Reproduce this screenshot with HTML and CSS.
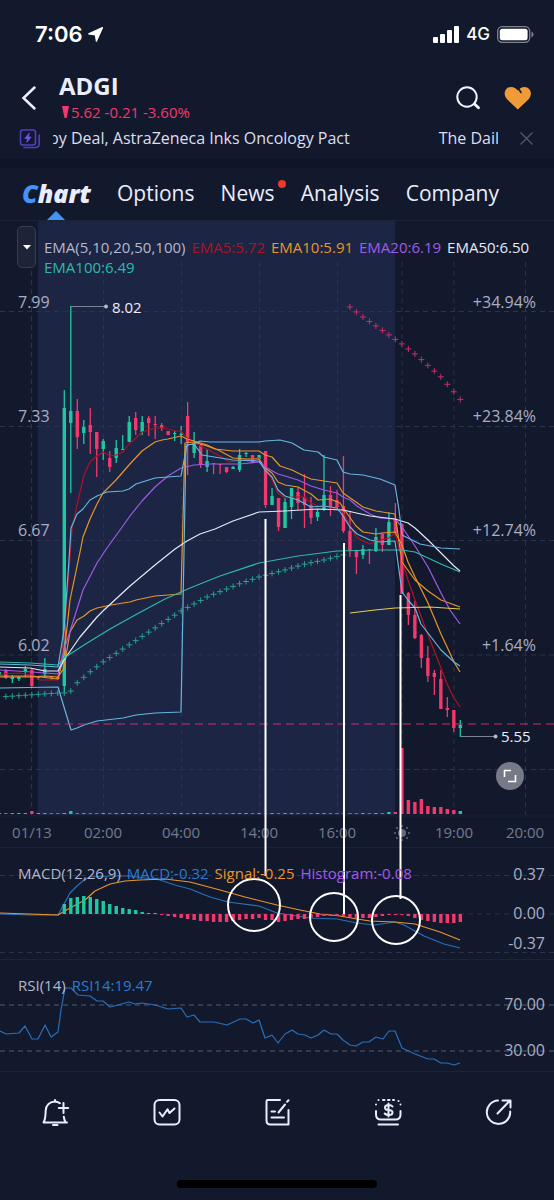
FILE: index.html
```html
<!DOCTYPE html>
<html lang="en">
<head>
<meta charset="utf-8">
<meta name="viewport" content="width=device-width, initial-scale=1">
<title>ADGI</title>
<link rel="stylesheet" href="styles.css">
</head>
<body>
<div class="status">
  <div class="clock">7:06
    <svg width="15" height="15" viewBox="0 0 15 15"><path d="M14.5.6 8.400 14.300 7.400 7.800.7 6.900Z" fill="#fff" stroke="#fff" stroke-width="1.200" stroke-linejoin="round"/></svg>
  </div>
  <div class="signal">
    <svg width="26" height="17" viewBox="0 0 26 17" fill="#fff"><rect x="0" y="11" width="5" height="6" rx="1"/><rect x="7" y="8" width="5" height="9" rx="1"/><rect x="14" y="4" width="5" height="13" rx="1"/><rect x="21" y="0" width="5" height="17" rx="1"/></svg>
    <span>4G</span>
    <svg width="37" height="17" viewBox="0 0 37 17"><rect x=".7" y=".7" width="32" height="15.6" rx="4.5" fill="none" stroke="#80838f" stroke-width="1.3"/><rect x="2.8" y="2.8" width="27.8" height="11.4" rx="2.5" fill="#fff"/><path d="M34.5 5.5q2 1 2 3t-2 3z" fill="#80838f"/></svg>
  </div>
</div>
<header class="head">
  <button class="icon-btn" aria-label="Back"><svg width="16" height="26" viewBox="0 0 16 26"><path d="M13.5 2.500 2.500 13 13.500 23.500" fill="none" stroke="#edf0fc" stroke-width="2.500" stroke-linecap="round"/></svg></button>
  <div class="quote">
    <h1>ADGI</h1>
    <p><svg width="7" height="12" viewBox="0 0 7 12"><path d="M0 0h7L4.500 12h-2z" fill="#f2386c"/></svg>5.62 -0.21 -3.60%</p>
  </div>
  <button class="icon-btn" aria-label="Search"><svg width="26" height="26" viewBox="0 0 26 26" fill="none" stroke="#f4f6ff" stroke-linecap="round"><circle cx="12" cy="12" r="9.700" stroke-width="2"/><path d="m19.500 19 4 3.800" stroke-width="2.800"/></svg></button>
  <button class="icon-btn" aria-label="Favorite"><svg width="28" height="26" viewBox="0 0 28 26"><path d="M13.800 24.500 3 14.200C-1.500 9.300 1 2 7.200 2c2.600 0 4.900 1.200 6.600 3.500C15.500 3.200 17.800 2 20.400 2 26.600 2 29.100 9.300 24.600 14.200Z" fill="#f09a38"/><path d="m14.600 3.800 2.400 3.700" stroke="#13192d" stroke-width="1.600" stroke-linecap="round"/></svg></button>
</header>
<div class="ticker">
  <svg width="22" height="20" viewBox="0 0 22 20" fill="none" stroke="#4f3fc0" stroke-width="1.600" stroke-linecap="round" stroke-linejoin="round"><rect x="1.500" y="1" width="15" height="15" rx="2.500"/><path d="M20.200 6v8.500q0 4-4 4H5"/><path d="M10.200 4.200 5.800 9.400h2.800l-.8 4 4.400-5.400H9.400z" fill="#7857f0" stroke="#6e50e8" stroke-width=".8"/></svg>
  <div class="news"><span>by Deal, AstraZeneca Inks Oncology Pact</span><span>The Daily</span></div>
  <button class="icon-btn" aria-label="Close news"><svg width="13" height="13" viewBox="0 0 13 13"><path d="m.5.5 12 12m0-12-12 12" stroke="#535974" stroke-width="1.200"/></svg></button>
</div>
<nav class="tabs">
  <a class="active" href="#chart"><b>C</b>hart</a>
  <a href="#options">Options</a>
  <a class="dot" href="#news">News</a>
  <a href="#analysis">Analysis</a>
  <a href="#company">Company</a>
</nav>
<main class="stage" id="chart">
  <svg class="plot" viewBox="0 220 554 852">
    <rect class="session" x="38" y="221" width="357" height="594"/>
    <path class="rule" d="M0 220.500H554M0 816H554M0 847.500H554M0 959.500H554M0 1071.500H554"/>
    <path class="grid" d="M0 311.500H554M0 426.500H554M0 540.500H554M0 655H554M0 769.500H554M0 875.500H554M0 914H554M0 952.500H554"/>
    <path class="grid" d="M31.500 262V815M103.500 262V815M181.500 262V815M259.500 262V815M337.500 262V815M402 262V815M454 262V815M525.500 262V815"/>
    <path class="level" d="M0 1005H554M0 1051H554"/>
    <g id="volume"></g>
    <g id="candles"></g>
    <g class="lines">
      <polyline class="red" points="0,674 19,673 32,675 40,680 58,680 64,640 72,530 77,505 84,475 90,462 97,456 103,452 110,456 116,455 123,452 129,444 136,438 142,432 155,428 162,428 168,429 175,431 181,431 187,438 194,443 207,449 220,456 229,462 259,458 266,470 272,480 278,493 285,498 292,497 304,497 311,503 318,506 330,507 343,512 350,525 356,537 363,541 370,544 376,541 389,538 395,533 402,560 408,580 415,600 428,635 441,668 447,684 454,698 460,707"/>
      <polyline class="orange" points="0,676 32,676 58,679 64,655 70,600 80,552 83,537 90,519 97,504 103,493 116,480 129,465 142,451 155,442 162,440 168,439 181,436 187,439 194,441 207,445 220,451 233,458 246,459 259,459 265,468 272,473 278,482 285,485 298,487 311,494 318,500 330,499 340,503 346,512 356,526 363,532 376,534 382,533 395,532 402,545 408,562 415,577 428,603 441,634 454,662 460,672"/>
      <polyline class="orange" points="0,677 32,677 45,676 58,677 64,668 70,632 77,620 84,616 90,611 97,608 111,605 123,603 130,602 136,600 155,596 181,594 185,443 194,442 207,446 215,449 233,451 259,451 265,455 272,457 280,466 292,470 304,476 311,479 324,481 337,483 343,493 356,502 363,507 376,511 395,514 402,562 415,580 428,591 441,600 460,607"/>
      <polyline class="purple" points="0,670 32,672 58,674 64,650 72,625 83,590 97,563 107,548 120,530 130,516 142,501 155,487 168,476 181,468 194,465 210,464 239,464 259,462 265,467 278,474 285,476 298,480 311,486 324,490 337,493 343,497 350,500 357,506 370,514 380,518 395,519 402,527 415,546 428,567 441,593 450,610 460,624"/>
      <polyline class="white" points="0,667 30,668 45,671 58,671 64,660 80,637 97,617 104,610 130,586 155,565 175,549 187,541 200,534 215,529 233,521 259,512 285,511 318,509 343,510 370,516 395,519 408,523 415,528 428,540 441,553 454,566 460,571"/>
      <polyline class="teal" points="0,662 30,663 58,665 64,658 84,645 110,629 137,614 165,599 190,588 220,576 259,563 298,556 337,551 376,550 395,550 402,550 415,552 428,558 441,564 460,572"/>
      <polyline class="blue" points="0,664 30,665 58,667 64,630 69,560 71,528 77,514 83,509 90,500 97,496 107,492 123,491 129,489 136,484 155,478 181,476 187,445 194,444 200,441 210,442 259,442 265,441 280,440 292,443 304,450 318,452 324,457 337,460 343,472 350,474 363,475 380,479 395,485 399,510 402,535 408,538 420,544 441,548 460,549"/>
      <polyline class="blue" points="0,688 58,687 64,707 71,730 77,728 84,725 97,721 123,718 136,715 155,713 181,712 186,445 194,444 202,455 233,460 259,461 265,470 272,477 278,490 285,496 298,500 311,507 324,506 337,508 343,516 350,527 357,534 370,540 380,542 395,541 402,592 408,600 415,608 421,624 441,650 454,662 460,666"/>
      <polyline class="yellow" points="350,613 375,610 395,608 430,607 460,609"/>
      <polyline class="macd" points="0,914 30,915 58,915 64,904 70,893 77,886 84,880 90,877 110,876 130,876 160,880 175,885 190,889 210,897 228,902 259,906 277,913 310,918 337,919 357,923 374,925 395,922 404,925 424,936 444,944 460,948"/>
      <polyline class="orange" points="0,913 58,915 70,908 85,900 95,891 110,884 125,881 140,880 165,879 190,882 220,890 245,897 277,905 300,910 320,914 340,916 357,919 370,921 395,922 415,924 440,932 460,940"/>
      <polyline class="macd" points="0,1031 6,1034 19,1033 25,1026 32,1039 38,1039 45,1025 51,1037 58,1032 61,1010 65,988 71,988 78,995 90,996 97,1001 103,1001 110,1007 118,1005 129,1002 135,1004 142,1003 155,1005 168,1009 181,1008 187,1017 194,1015 200,1022 214,1022 227,1025 240,1019 246,1019 253,1023 259,1020 265,1038 272,1035 278,1043 285,1034 292,1030 298,1034 305,1035 311,1038 318,1035 324,1030 331,1034 337,1034 343,1040 350,1045 356,1046 363,1042 369,1042 376,1037 383,1039 389,1031 395,1031 402,1048 415,1054 428,1059 434,1059 441,1063 447,1063 454,1065 460,1063"/>
    </g>
    <path id="sar-up" class="sar-up"/>
    <path id="sar-down" class="sar-down"/>
    <g id="histogram"></g>
    <path class="last-price" d="M0 724H554"/>
    <path class="callout" d="M71 306.500H106M460.500 736.500H495"/>
    <g fill="#b4b8c8"><circle cx="106" cy="306.500" r="2"/><circle cx="495.500" cy="736.500" r="2"/></g>
    <g class="mark"><text x="112" y="313">8.02</text><text x="501" y="742">5.55</text></g>
    <g class="axis">
      <text x="18" y="308">7.99</text><text x="18" y="422">7.33</text><text x="18" y="536">6.67</text><text x="18" y="651">6.02</text>
    </g>
    <g class="axis end">
      <text x="536" y="308">+34.94%</text><text x="536" y="422">+23.84%</text><text x="536" y="536">+12.74%</text><text x="536" y="651">+1.64%</text>
      <text x="545" y="880">0.37</text><text x="545" y="919">0.00</text><text x="545" y="949">-0.37</text><text x="545" y="1010">70.00</text><text x="545" y="1056">30.00</text>
    </g>
    <g class="time">
      <text x="32" y="838">01/13</text><text x="103" y="838">02:00</text><text x="181" y="838">04:00</text><text x="259" y="838">14:00</text><text x="337" y="838">16:00</text><text x="454" y="838">19:00</text><text x="525" y="838">20:00</text>
    </g>
    <g stroke="#656a80" stroke-width="2" stroke-linecap="round"><circle cx="402" cy="833" r="3" fill="#656a80"/><path d="M402 826v0M402 840v0M395 833h0M409 833h0M397 828h0M407 828h0M397 838h0M407 838h0"/></g>
    <g class="drawn"><path d="M265.500 519V876M344 543V914M400.500 595V899"/><circle cx="254" cy="905" r="26"/><circle cx="334" cy="917" r="24"/><circle cx="396" cy="920" r="24"/></g>
  </svg>
  <button class="toggle" aria-label="Indicators"><svg width="8" height="5" viewBox="0 0 8 5"><path d="M0 0h8L4 4.500z" fill="#fff"/></svg></button>
  <div class="legend ema"><span>EMA(5,10,20,50,100)</span><span class="c-red">EMA5:5.72</span><span class="c-orange">EMA10:5.91</span><span class="c-purple">EMA20:6.19</span><span class="c-white">EMA50:6.50</span><span class="c-teal">EMA100:6.49</span></div>
  <div class="legend macd-legend"><span>MACD(12,26,9)</span><span class="c-blue">MACD:-0.32</span><span class="c-orange">Signal:-0.25</span><span class="c-purple">Histogram:-0.08</span></div>
  <div class="legend rsi-legend"><span>RSI(14)</span><span class="c-blue">RSI14:19.47</span></div>
  <button class="expand" aria-label="Full screen"><svg width="14" height="14" viewBox="0 0 14 14" fill="none" stroke="#fff" stroke-width="1.600"><path d="M1.500 8V1.500H8M5 12.500h7.500V6"/></svg></button>
</main>
<footer class="toolbar">
  <button aria-label="Add alert"><svg width="30" height="30" viewBox="0 0 30 30"><path d="M2.500 25.500H26M2.500 25.500c2-3 2-6 2.200-12C5 8.500 8.500 5 13.500 4.500c2 0 4 .6 5.500 1.700M14 4.300V3M24.600 25.500c-1-2-1.600-3.500-1.800-5.800M22.500 6v10M17.800 11h9.400M12 28h4.500"/></svg></button>
  <button aria-label="Indicators"><svg width="30" height="30" viewBox="0 0 30 30"><rect x="2.500" y="3" width="25" height="24.500" rx="5"/><path d="m7.500 15.500 3 4 5-7.300 2 3.800 5-4.500"/></svg></button>
  <button aria-label="Trade note"><svg width="30" height="30" viewBox="0 0 30 30"><path d="M17 3H4.500Q3.500 3 3.500 5v18.500q0 4 4 4h18V13M25.500 3.300l-1.400 1.400M22 7.500l-6.500 8M8.500 14.500h3.500M8.500 20.500h12.500"/></svg></button>
  <button aria-label="Options trading"><svg width="30" height="30" viewBox="0 0 30 30"><path d="M3 14v3.500q0 5 5 5h14.500q5 0 5-5V14M5.500 27.500H25M3 7.500h0M5.500 3h0M10 3h1.500M15 3h1.500M20 3h1M25.500 4h0M27.500 7.500h0M19.500 9.500q-1-1.500-4-1.500-3.500 0-3.500 2.500t3.500 2.500q4 0 4 2.500T16 18q-3 0-4.300-1.500M15.500 6.500v13"/></svg></button>
  <button aria-label="Share"><svg width="30" height="30" viewBox="0 0 30 30"><path d="M14 3.500A11.700 11.700 0 1 0 26.200 14.500M13.500 16.500 25.500 4M18.500 3.500h8v7"/></svg></button>
</footer>
<div class="home"></div>
<script src="chart.js"></script>
</body>
</html>
```
FILE: styles.css
```css
* { box-sizing: border-box; }
body { margin: 0; background: #13192d; color: #eaedfb; font-family: "Open Sans", "Noto Sans", sans-serif; }
button { padding: 0; border: 0; background: none; color: inherit; }
svg { display: block; flex: none; }

.status { display: flex; align-items: center; justify-content: space-between; height: 68px; padding: 0 20px 0 35px; font-family: Inter, sans-serif; color: #fff; }
.clock { display: flex; align-items: center; gap: 5px; font-size: 22px; font-weight: 600; }
.signal { display: flex; align-items: center; gap: 7px; font-size: 17px; font-weight: 500; }

.head { display: flex; align-items: center; height: 58px; padding: 2px 22px 0 21px; }
.icon-btn { display: flex; align-items: center; justify-content: center; }
.head .icon-btn + .icon-btn { margin-left: 23px; }
.quote { flex: 1; padding-left: 22px; }
.quote h1 { margin: 0; font-size: 24px; line-height: 28px; font-weight: 700; }
.quote p { display: flex; align-items: center; gap: 2px; margin: 0; padding-left: 3px; font-size: 15px; line-height: 24px; color: #f2386c; }

.ticker { display: flex; align-items: center; height: 33px; padding: 0 21px 8px 19px; font-size: 16px; line-height: 25px; }
.news { flex: 1; display: flex; gap: 89px; margin: 0 22px 0 12px; overflow: hidden; white-space: nowrap; color: #dcdff0; }
.news span:first-child { margin-left: -4px; }

.tabs { display: flex; justify-content: space-between; height: 61px; padding: 9px 55px 0 22px; border-top: 9px solid #10142a; font-size: 21px; line-height: 32px; }
.tabs a { position: relative; height: 43px; color: #eaedfb; text-decoration: none; }
.tabs .active { font-size: 25px; font-weight: 800; font-style: italic; }
.tabs .active b { color: #4294f7; font-weight: 800; }
.tabs .active::after { content: ""; position: absolute; left: 25px; bottom: 0; border: 9px solid transparent; border-top: 0; border-bottom-color: #4294f7; }
.tabs .dot::after { content: ""; position: absolute; right: -11px; top: 3px; width: 8px; height: 8px; border-radius: 50%; background: #e8392b; }

.stage { position: relative; }
.plot { width: 100%; height: auto; }
.session { fill: #1c2544; }
.rule { stroke: #1d2337; }
.grid { stroke: #2b3249; stroke-dasharray: 5 4; fill: none; }
.level { stroke: #565c70; stroke-dasharray: 5 4; }
.lines { fill: none; stroke-width: 1.2; stroke-linejoin: round; }
.red { stroke: #b0121f; }
.orange { stroke: #e8952a; }
.purple { stroke: #a259e6; }
.white { stroke: #e6e9f5; }
.teal { stroke: #2eb9a8; }
.blue { stroke: #66b7e0; }
.yellow { stroke: #e6cd4e; }
.macd { stroke: #2a6fba; }
.sar-up { stroke: #2aa18e; }
.sar-down { stroke: #c53066; }
.up { fill: #1fc8a2; }
.down { fill: #f2386c; }
.last-price { stroke: #d22d68; stroke-dasharray: 8 5; }
.callout { stroke: #7c8194; }
.mark { fill: #eaedfb; font-size: 15px; }
.axis { fill: #a9aec3; font-size: 16px; }
.end { text-anchor: end; }
.time { fill: #74798e; font-size: 15px; text-anchor: middle; }
.drawn { fill: none; stroke: #fff; stroke-width: 2; }

.legend { position: absolute; display: flex; flex-wrap: wrap; gap: 0 6px; font-size: 15px; line-height: 20px; color: #b4b8cc; }
.ema { top: 17px; left: 44px; right: 16px; }
.macd-legend { top: 643px; left: 18px; }
.rsi-legend { top: 755px; left: 18px; }
.c-red { color: #b0121f; }
.c-orange { color: #e8952a; }
.c-purple { color: #a259e6; }
.c-white { color: #e6e9f5; }
.c-teal { color: #2eb9a8; }
.c-blue { color: #2a7bd0; }

.toggle { position: absolute; left: 17px; top: 6px; display: flex; align-items: center; justify-content: center; width: 19px; height: 42px; border: 1px solid #363c52; border-radius: 5px; background: #1e2438; }
.expand { position: absolute; right: 30px; top: 542px; display: flex; align-items: center; justify-content: center; width: 28px; height: 28px; border-radius: 50%; background: #777a86; }

.toolbar { display: flex; justify-content: space-between; height: 108px; padding: 24px 40px 0 41px; }
.toolbar button { height: 32px; }
.toolbar svg { fill: none; stroke: #eaedfb; stroke-width: 2; stroke-linecap: round; stroke-linejoin: round; }
.home { width: 36%; height: 8px; margin: 0 auto 12px; border-radius: 4px; background: #000; }
```
FILE: chart.js
```js
const NS = "http://www.w3.org/2000/svg";
const STEP = 6.492;
const xAt = i => 64.3 + STEP * i;

function bar(parent, x, width, top, bottom, cls) {
  const r = document.createElementNS(NS, "rect");
  r.setAttribute("x", x - width / 2);
  r.setAttribute("y", top);
  r.setAttribute("width", width);
  r.setAttribute("height", Math.max(bottom - top, 1));
  r.setAttribute("class", cls);
  parent.appendChild(r);
}

// [direction, high, low, body top, body bottom], one entry per 10-minute slot
const first = -10;
const candles = [
  [1,672,675,672,675],[0,669,679,670,678],[1,675,683,677,679],[1,676,681,677,679],[1,666,677,669,672],
  [0,669,687,670,686],[1,676,680,677,678],[1,658,677,669,674],[0,676,680,677,678],[0,676,680,677,679],
  [1,390,692,408,686],[1,306,493,411,423],[0,399,449,411,437],[1,420,444,427,433],[0,408,454,425,432],
  [0,432,477,432,449],[1,439,460,441,449],[0,451,472,458,467],[1,440,463,448,458],[1,435,450,449,450],
  [1,416,442,422,442],[0,412,435,418,430],[1,416,435,422,432],[0,416,436,418,423],[0,416,439,424,425],
  [0,423,431,425,428],[0,431,435,431,435],[1,431,441,433,434],[1,426,444,434,435],[0,402,475,416,443],
  [1,432,458,443,453],[0,444,468,445,465],[1,449,472,461,467],[0,463,474,463,464],[0,464,474,464,465],
  [0,467,473,467,472],[1,466,469,467,469],[1,449,472,455,470],[1,452,457,453,454],[0,455,463,455,463],
  [1,455,460,455,459],[0,451,508,451,505],[1,488,505,496,505],[0,498,531,498,527],[1,498,528,502,528],
  [1,488,519,488,507],[0,487,510,492,503],[0,474,528,497,505],[0,497,524,505,518],[1,509,521,512,517],
  [1,455,511,495,510],[0,486,516,495,507],[0,490,508,500,507],[0,456,533,506,531],[0,511,557,531,551],
  [0,551,574,551,557],[1,545,559,549,555],[0,549,564,549,550],[1,528,552,537,551],[0,533,552,534,545],
  [1,512,545,522,545],[0,503,535,519,533],[0,523,594,524,594],[0,592,625,593,615],[0,601,639,615,638],
  [0,634,668,635,658],[0,646,682,658,676],[0,670,695,673,677],[0,670,709,679,709],[0,697,717,708,710],
  [0,710,732,710,728],[1,720,737,725,728]
];
const candleLayer = document.getElementById("candles");
const volumeLayer = document.getElementById("volume");
const volumeTops = { "-5": 811, 1: 811, 50: 812, 51: 812, 52: 748, 53: 800, 54: 802, 55: 799, 56: 806, 57: 807, 58: 807, 59: 809, 60: 810, 61: 811 };
candles.forEach(([up, high, low, top, bottom], n) => {
  const i = n + first, cls = up ? "up" : "down";
  bar(candleLayer, xAt(i), 1.3, high, low, cls);
  bar(candleLayer, xAt(i), 3.4, top, bottom, cls);
  bar(volumeLayer, xAt(i), 3.4, volumeTops[i] || 813, 814, cls);
});

const histogram = [904,898,897,896,897,899,901,904,906,908,909,910,912,913,913,
  915,916,917,918,919,920,921,921,922,922,922,921,920,919,919,918,920,920,922,921,920,919,919,918,
  917,916,916,916,916,917,918,918,918,917,916,915,914,915,916,918,920,921,922,923,923,923,922];
const histogramLayer = document.getElementById("histogram");
histogram.forEach((y, i) => {
  if (y < 914) bar(histogramLayer, xAt(i), 3.4, y, 914, "up");
  else bar(histogramLayer, xAt(i), 3.4, 914, y, "down");
});

function pluses(id, from, to, anchors) {
  let d = "";
  for (let i = from; i <= to; i++) {
    const x = xAt(i);
    let k = 1;
    while (k < anchors.length - 1 && anchors[k][0] < x) k++;
    const [x0, y0] = anchors[k - 1], [x1, y1] = anchors[k];
    const y = y0 + (y1 - y0) * (x - x0) / (x1 - x0);
    d += `M${x - 3} ${y}h6M${x} ${y - 3}v6`;
  }
  document.getElementById(id).setAttribute("d", d);
}
pluses("sar-up", -9, 43, [[0,697],[58,693],[64,693],[71,691],[77,683],[90,672],[103,662],[129,645],[155,628],[181,611],[194,604],[207,597],[239,584],[259,577],[285,570],[305,564],[324,560],[343,555]]);
pluses("sar-down", 44, 61, [[350,307],[363,317],[402,344],[415,354],[441,377],[454,392],[460,399]]);
```
